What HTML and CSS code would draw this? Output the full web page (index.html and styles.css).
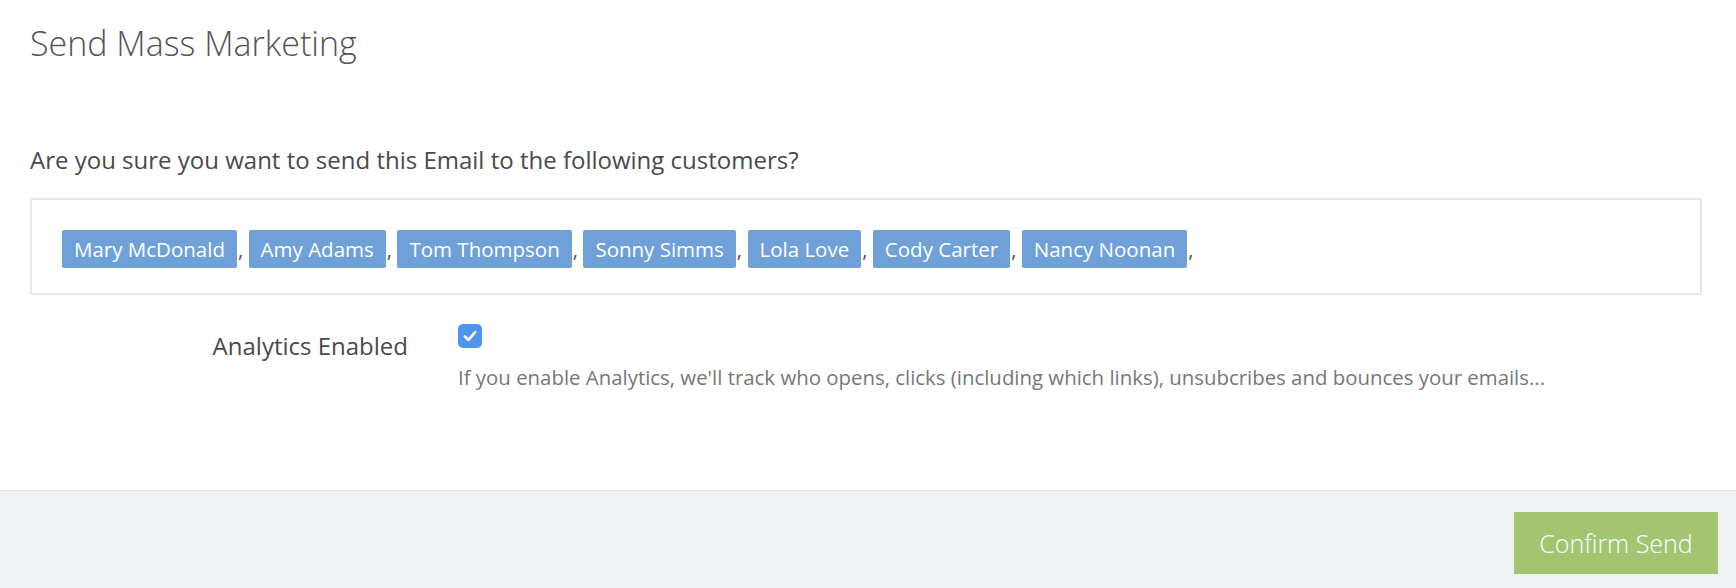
FILE: index.html
```html
<!DOCTYPE html>
<html lang="en">
<head>
  <meta charset="UTF-8" />
  <meta name="viewport" content="width=device-width, initial-scale=1.0"/>
  <title>Send Mass Marketing</title>
  <link rel="stylesheet" href="styles.css">
</head>
<body>
  <div class="modal">
    <div class="modal-body">
      <h1 class="title">Send Mass Marketing</h1>
      <p class="question">Are you sure you want to send this Email to the following customers?</p>
      <div class="recipients">
        <span class="tag">Mary McDonald</span>,
        <span class="tag">Amy Adams</span>,
        <span class="tag">Tom Thompson</span>,
        <span class="tag">Sonny Simms</span>,
        <span class="tag">Lola Love</span>,
        <span class="tag">Cody Carter</span>,
        <span class="tag">Nancy Noonan</span>,
      </div>
      <div class="form-row">
        <label class="form-label">Analytics Enabled</label>
        <div class="form-control">
          <span class="checkbox">
            <svg width="24" height="24" viewBox="0 0 24 24"><path d="M6.8 12.4 L10.4 15.8 L17.2 8.2" fill="none" stroke="#fff" stroke-width="2.6" stroke-linecap="round" stroke-linejoin="round"/></svg>
          </span>
          <p class="help">If you enable Analytics, we'll track who opens, clicks (including which links), unsubcribes and bounces your emails...</p>
        </div>
      </div>
    </div>
    <div class="modal-footer">
      <button class="btn-confirm">Confirm Send</button>
    </div>
  </div>
</body>
</html>
```

FILE: styles.css
```css
body {
  margin: 0;
  font-family: "Open Sans", "Liberation Sans", sans-serif;
  background: #fff;
  color: #4a4a4a;
}
.modal {
  height: 588px;
  display: flex;
  flex-direction: column;
}
.modal-body {
  padding: 0 34px 0 30px;
  height: 490px;
  box-sizing: border-box;
}
.title {
  font-size: 34px;
  font-weight: 300;
  color: #555;
  margin: 0;
  padding-top: 19px;
  line-height: 48px;
}
.question {
  font-size: 24px;
  color: #4a4a4a;
  margin: 78px 0 0;
  line-height: 30px;
}
.recipients {
  margin-top: 23px;
  border: 2px solid #e8e8e8;
  padding: 30px 30px 25px;
  height: 97px;
  box-sizing: border-box;
  font-size: 20.5px;
  color: #555;
  line-height: 38px;
}
.tag {
  display: inline-block;
  background: #6fa1d8;
  color: #fff;
  padding: 0 12px;
  height: 38px;
  line-height: 38px;
  border-radius: 2px;
  margin-right: 1px;
}
.form-row {
  display: grid;
  grid-template-columns: 378px 1fr;
  column-gap: 50px;
  margin-top: 29px;
}
.form-label {
  text-align: right;
  font-size: 24px;
  color: #4a4a4a;
  padding-top: 7px;
  line-height: 30px;
}
.checkbox {
  display: block;
  width: 24px;
  height: 24px;
  border-radius: 5px;
  background: #4f94ef;
}
.checkbox svg {
  display: block;
}
.help {
  margin: 14px 0 0;
  font-size: 20.4px;
  color: #777;
  line-height: 30px;
}
.modal-footer {
  flex: 1;
  background: #eef2f5;
  border-top: 1px solid #e4e9ed;
  display: flex;
  justify-content: flex-end;
  align-items: flex-start;
  padding: 21px 18px 0 0;
}
.btn-confirm {
  width: 204px;
  height: 62px;
  background: #a3c572;
  border: none;
  color: #fff;
  font-family: "Open Sans", "Liberation Sans", sans-serif;
  font-size: 25px;
  font-weight: 300;
}
```
